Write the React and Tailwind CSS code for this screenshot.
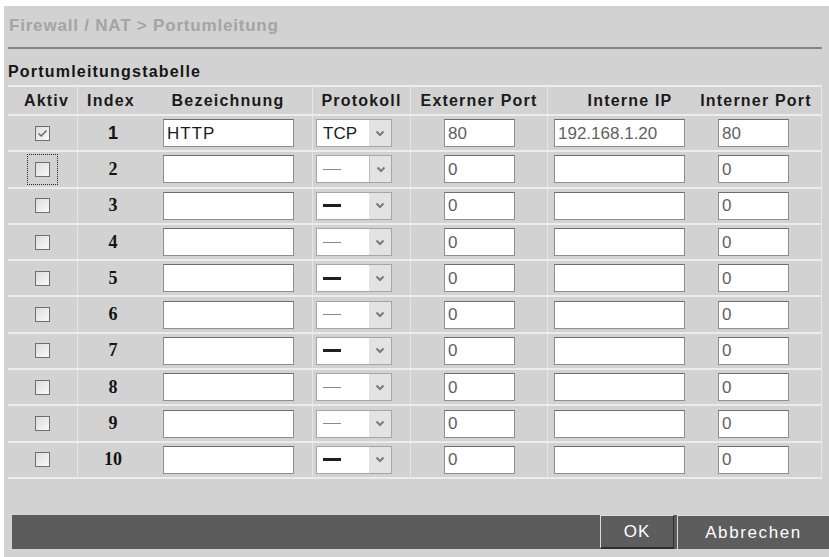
import React from "react";

const sans = { fontFamily: '"Liberation Sans", Arial, sans-serif' };
const serif = { fontFamily: '"Liberation Serif", "Times New Roman", serif' };

const rows = [
  { idx: 1, active: true, name: "HTTP", proto: "TCP", ext: "80", ip: "192.168.1.20", intp: "80" },
  { idx: 2, focus: true },
  { idx: 3, dark: true },
  { idx: 4 },
  { idx: 5, dark: true },
  { idx: 6 },
  { idx: 7, dark: true },
  { idx: 8 },
  { idx: 9 },
  { idx: 10, dark: true },
];

function Checkbox({ checked }) {
  return (
    <div className="w-[15px] h-[15px] border border-[#6f6f6f] bg-gradient-to-br from-[#dcdcdc] to-[#fafafa] flex items-center justify-center">
      {checked && (
        <svg width="11" height="9" viewBox="0 0 11 9">
          <path d="M1.5 4.5 L4.3 7 L9.5 1.5" fill="none" stroke="#6a6a6a" strokeWidth="1.6" />
        </svg>
      )}
    </div>
  );
}

function Field({ w, children, mono }) {
  return (
    <div
      className={`h-[28px] bg-white border border-[#8e8e8e] border-t-[#6e6e6e] flex items-center pl-[3px] text-[17px] leading-none ${mono ? "text-[#5f5f5f]" : "text-[#1c1c1c] tracking-[1px]"}`}
      style={{ ...sans, width: w }}
    >
      {children}
    </div>
  );
}

function Select({ value, dark, boxed }) {
  return (
    <div className="w-[76px] h-[28px] bg-white border border-[#a6a6a6] flex items-stretch" style={sans}>
      <div className="flex-1 flex items-center pl-[6px] text-[17px] leading-none text-[#1c1c1c]">
        {value ? (
          value
        ) : (
          <div className={`w-[18px] ${dark ? "h-[3px] bg-[#1f1f1f]" : "h-[1px] bg-[#8a8a8a]"}`} />
        )}
      </div>
      <div className={`w-[22px] flex items-center justify-center bg-[#e3e3e3] ${boxed ? "border-l border-[#bdbdbd]" : ""}`}>
        <svg width="10" height="7" viewBox="0 0 10 7">
          <path d="M1.5 1.5 L5 5 L8.5 1.5" fill="none" stroke="#7a7a7a" strokeWidth="2" />
        </svg>
      </div>
    </div>
  );
}

const cols = "grid-cols-[69px_71px_164px_98px_137px_143px_132px]";

export default function App() {
  return (
    <div className="w-[829px] h-[557px] bg-white pt-[6px] pl-[4px] overflow-hidden" style={sans}>
      <div className="h-[551px] bg-[#d2d2d2] flex flex-col">
        {/* Breadcrumb */}
        <div className="pt-[11px] pl-[5px] h-[29px] text-[17px] leading-[18px] font-bold tracking-[0.8px] text-[#a4a4a4]">
          Firewall / NAT &gt; Portumleitung
        </div>
        <div className="mt-[12px] ml-[4px] w-[814px] h-[2px] bg-[#858585]" />

        <div className="mt-[14px] pl-[4px] h-[18px] text-[16px] leading-[18px] font-bold tracking-[1.2px] text-[#151515]">
          Portumleitungstabelle
        </div>

        {/* Forwarding table */}
        <div className="mt-[4px] ml-[4px] w-[814px] border-t-2 border-[#ececec] border-r border-r-[#e6e6e6]">
          <div className={`grid ${cols} h-[27px] items-center text-[16px] font-bold tracking-[1.2px] text-[#1b1b1b]`}>
            <div className="text-center pl-[8px]">Aktiv</div>
            <div className="text-center pr-[4px] h-full flex items-center justify-center border-l border-[#e6e6e6]">Index</div>
            <div className="text-center pr-[4px]">Bezeichnung</div>
            <div className="text-center h-full flex items-center justify-center border-l border-[#e6e6e6]">Protokoll</div>
            <div className="text-center h-full flex items-center justify-center border-l border-[#e6e6e6]">Externer Port</div>
            <div className="text-center pl-[22px] h-full flex items-center justify-center border-l border-[#e6e6e6]">Interne IP</div>
            <div className="text-center">Interner Port</div>
          </div>

          {rows.map((r) => (
            <div key={r.idx} className={`grid ${cols} h-[36.3px] border-t-2 border-[#ececec] items-center`}>
              <div className="flex items-center justify-center h-full">
                {r.focus ? (
                  <div className="border border-dotted border-[#2a2a2a] p-[7px]">
                    <Checkbox />
                  </div>
                ) : (
                  <Checkbox checked={r.active} />
                )}
              </div>
              <div
                className="h-full flex items-center justify-center text-[18px] font-bold text-[#141414] border-l border-[#e6e6e6]"
                style={r.idx === 1 ? sans : serif}
              >
                {r.idx}
              </div>
              <div className="pl-[15px]">
                <Field w={131}>{r.name}</Field>
              </div>
              <div className="h-full flex items-center pl-[3px] border-l border-[#e6e6e6]">
                <Select value={r.proto} dark={r.dark} boxed={r.idx === 2} />
              </div>
              <div className="h-full flex items-center pl-[33px] border-l border-[#e6e6e6]">
                <Field w={71} mono>{r.ext || "0"}</Field>
              </div>
              <div className="h-full flex items-center pl-[6px] border-l border-[#e6e6e6]">
                <Field w={131} mono>{r.ip}</Field>
              </div>
              <div className="pl-[28px]">
                <Field w={71} mono>{r.intp || "0"}</Field>
              </div>
            </div>
          ))}
          <div className="h-[2px] bg-[#ececec]" />
        </div>

        {/* Action bar */}
        <div className="mt-[36px] ml-[8px] h-[34px] bg-[#5b5b5b] flex items-stretch justify-end">
          <button className="w-[74px] mr-[3px] border-t border-l border-[#dcdcdc] border-b-2 border-r border-b-[#2e2e2e] border-r-[#2e2e2e] bg-[#5d5d5d] text-white text-[17px] tracking-[1px]" style={sans}>
            OK
          </button>
          <button className="w-[152px] border-t border-l border-[#dcdcdc] bg-[#5d5d5d] text-white text-[17px] tracking-[1.6px]" style={sans}>
            Abbrechen
          </button>
        </div>
      </div>
    </div>
  );
}
